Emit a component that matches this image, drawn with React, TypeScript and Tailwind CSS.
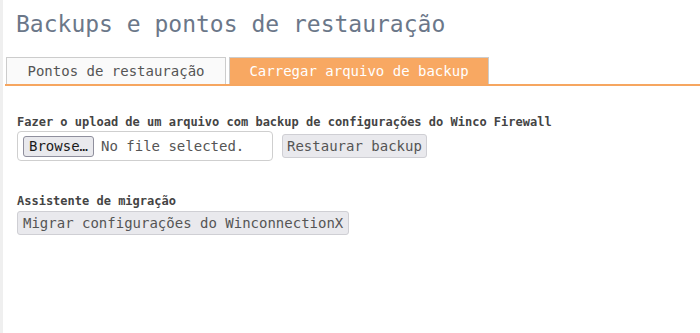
export default function App() {
  const mono = { fontFamily: '"DejaVu Sans Mono", monospace' };
  return (
    <div className="flex min-h-[333px] w-[700px] bg-white" style={mono}>
      {/* left rail */}
      <div className="w-[3px] shrink-0 bg-[#efefef]" />

      <div className="flex-1 flex flex-col">
        <h1 className="ml-[13px] mt-[8px] text-[23px] leading-[32px] text-[#6b7789]">
          Backups e pontos de restauração
        </h1>

        {/* Tabs */}
        <div className="ml-[2px] mt-[17px] flex items-end gap-[3px] border-b-2 border-[#f6a660] pl-[1px]">
          <div className="h-[27px] w-[220px] flex items-center justify-center border border-b-0 border-[#cccccc] bg-[#fafafa] text-[14px] text-[#555555]">
            Pontos de restauração
          </div>
          <div className="h-[27px] w-[260px] flex items-center justify-center border border-b-0 border-[#cccccc] bg-[#f8a862] text-[14px] text-white">
            Carregar arquivo de backup
          </div>
        </div>

        {/* Upload */}
        <div className="ml-[14px] mt-[29px] flex flex-col">
          <label className="text-[12px] font-bold leading-[14px] text-[#444444]">
            Fazer o upload de um arquivo com backup de configurações do Winco Firewall
          </label>
          <div className="mt-[2px] flex items-center gap-[9px]">
            <div className="flex h-[30px] w-[256px] items-center gap-[7px] rounded-[4px] border border-[#cfcfcf] bg-white pl-[5px]">
              <span className="flex h-[21px] w-[71px] items-center justify-center rounded-[3px] border border-[#8f8f9d] bg-[#e9e9ed] text-[14px] text-[#1b1b1b]">
                Browse…
              </span>
              <span className="text-[14px] text-[#555555]">No file selected.</span>
            </div>
            <button className="flex h-[24px] items-center rounded-[3px] border border-[#cfcfd4] bg-[#e9e9ed] px-[4px] text-[14px] text-[#555555]">
              Restaurar backup
            </button>
          </div>

          <label className="mt-[33px] text-[12px] font-bold leading-[14px] text-[#444444]">
            Assistente de migração
          </label>
          <div className="mt-[3px]">
            <button className="flex h-[24px] items-center rounded-[3px] border border-[#cfcfd4] bg-[#e9e9ed] px-[5px] text-[14px] text-[#555555]">
              Migrar configurações do WinconnectionX
            </button>
          </div>
        </div>
      </div>
    </div>
  );
}
